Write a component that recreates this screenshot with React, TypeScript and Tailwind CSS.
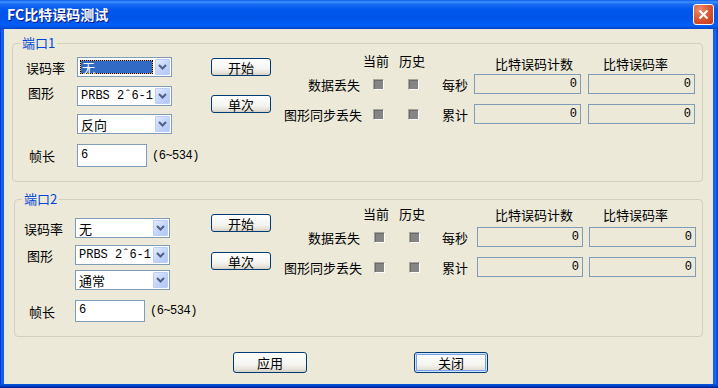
import React from "react";

const MONO = "[font-family:'Liberation_Mono',monospace]";

function Chevron() {
  return (
    <svg width="9" height="6" viewBox="0 0 9 6">
      <polyline points="1,1 4.5,4.5 8,1" fill="none" stroke="#4D6185" strokeWidth="2" />
    </svg>
  );
}

function Combo({ text, mono, selected }: { text: string; mono?: boolean; selected?: boolean }) {
  return (
    <div className="w-[95px] h-full border border-[#7F9DB9] bg-white flex p-[1px]">
      <div className="flex-1 flex items-center pl-[1px] pr-[2px]">
        {selected ? (
          <div className="w-full h-[14px] bg-[#F0B030] border border-dotted border-black">
            <div className="w-full h-full bg-[#316AC5] text-white flex items-center pl-[1px] leading-none">{text}</div>
          </div>
        ) : (
          <span className={`pl-[1px] leading-none ${mono ? MONO + " text-[12px]" : ""}`}>{text}</span>
        )}
      </div>
      <div className="w-[15px] h-full border border-[#BCCEF6] rounded-[1px] bg-[linear-gradient(135deg,#E2EAFD,#C0D2FA_60%,#B2C6F5)] flex items-center justify-center">
        <Chevron />
      </div>
    </div>
  );
}

function Btn({ text, w, h, def }: { text: string; w: string; h: string; def?: boolean }) {
  return (
    <div
      className={`${w} ${h} rounded-[3px] border border-[#003C74] bg-[linear-gradient(to_bottom,#FFFFFF,#F4F4F0_60%,#E6E3D9_85%,#D6D0C5)] flex items-center justify-center leading-none ${
        def ? "shadow-[inset_0_0_0_1px_#CEE7FF,inset_0_0_0_2px_#7D9DEB]" : ""
      }`}
    >
      {text}
    </div>
  );
}

function Field({ w }: { w: string }) {
  return (
    <div className={`${w} h-[20px] border border-[#7F9DB9] flex items-center justify-end pr-[3px] ${MONO} text-[12px] leading-none`}>
      0
    </div>
  );
}

function Check() {
  return (
    <div className="w-[11px] h-[11px] border border-[#A8A59A] border-b-white border-r-white bg-[#858585] shadow-[inset_1px_1px_0_#6A6A6A]" />
  );
}

function Input() {
  return (
    <div className={`w-[70px] h-full border border-[#7F9DB9] bg-white flex items-center pl-[3px] pb-[2px] ${MONO} text-[12px] leading-none`}>
      6
    </div>
  );
}

function Legend({ text }: { text: string }) {
  return (
    <span className="absolute top-[-8px] left-[7px] px-[2px] bg-[#ECE9D8] text-[#0046D5] leading-[14px]">{text}</span>
  );
}

export default function App() {
  return (
    <div className="w-[718px] h-[388px] flex flex-col overflow-hidden bg-[#0855DD] [font-family:'Noto_Sans_CJK_SC',sans-serif] text-[13px] text-black leading-none">
      {/* Title bar */}
      <div className="h-[29px] flex items-center justify-between pl-[7px] pr-[4px] bg-[linear-gradient(to_bottom,#0A5DE8_0%,#3D91FA_7%,#1A6CF3_14%,#0058EE_32%,#0054E8_60%,#005DF5_84%,#0058EB_92%,#0043C6_100%)]">
        <span className="text-white font-bold text-[14px] [text-shadow:1px_1px_0_#0A1883] pb-[1px]">FC比特误码测试</span>
        <div className="w-[21px] h-[21px] rounded-[3px] border border-white bg-[radial-gradient(circle_at_30%_25%,#F08C6C,#D8522F_55%,#C0391C)] flex items-center justify-center">
          <svg width="11" height="11" viewBox="0 0 11 11">
            <line x1="1.5" y1="1.5" x2="9.5" y2="9.5" stroke="white" strokeWidth="2.2" />
            <line x1="9.5" y1="1.5" x2="1.5" y2="9.5" stroke="white" strokeWidth="2.2" />
          </svg>
        </div>
      </div>

      <div className="flex h-[355px]">
        <div className="w-[4px] bg-[linear-gradient(to_right,#0831D9_0,#0831D9_1px,#166AEE_1px,#0A5AE5_100%)]" />
        <div className="w-[709px] bg-[#ECE9D8] flex flex-col">
          {/* Group 1 */}
          <div className="relative mt-[14px] ml-[8px] w-[691px] h-[139px] border border-[#D0D0BF] rounded-[4px] flex">
            <Legend text="端口1" />
            <div className="w-[198px] pl-[13px] pt-[13px] flex flex-col">
              <div className="h-[20px] flex items-center">
                <span className="w-[51px]">误码率</span>
                <Combo text="无" selected />
              </div>
              <div className="mt-[9px] h-[20px] flex items-start">
                <span className="w-[51px] pl-[2px] leading-[13px]">图形</span>
                <Combo text="PRBS 2ˆ6-1" mono />
              </div>
              <div className="mt-[8px] h-[20px] flex">
                <span className="w-[51px]" />
                <Combo text="反向" />
              </div>
              <div className="mt-[10px] h-[23px] flex items-center">
                <span className="w-[51px] pl-[3px]">帧长</span>
                <Input />
                <span className={`ml-[5px] ${MONO} text-[12px] tracking-[-0.5px]`}>(6~534)</span>
              </div>
            </div>
            <div className="w-[60px] pt-[14px] flex flex-col">
              <Btn text="开始" w="w-[60px]" h="h-[18px]" />
              <div className="mt-[19px]">
                <Btn text="单次" w="w-[60px]" h="h-[18px]" />
              </div>
            </div>
            <div className="pt-[6px] flex flex-col">
              <div className="h-[20px] flex items-center">
                <span className="w-[91px]" />
                <span className="w-[36px] pl-[1px]">当前</span>
                <span className="w-[36px] pl-[1px]">历史</span>
                <span className="w-[40px]" />
                <span className="w-[114px] pl-[21px] pt-[6px]">比特误码计数</span>
                <span className="w-[107px] pl-[15px] pt-[6px]">比特误码率</span>
              </div>
              <div className="mt-[4px] h-[20px] flex items-center">
                <span className="w-[91px] text-right pr-[2px]">数据丢失</span>
                <span className="w-[36px] pl-[11px]"><Check /></span>
                <span className="w-[36px] pl-[10px]"><Check /></span>
                <span className="w-[40px] pl-[8px]">每秒</span>
                <span className="w-[114px]"><Field w="w-[107px]" /></span>
                <Field w="w-[107px]" />
              </div>
              <div className="mt-[10px] h-[20px] flex items-center">
                <span className="w-[91px] text-right pr-[0px]">图形同步丢失</span>
                <span className="w-[36px] pl-[11px]"><Check /></span>
                <span className="w-[36px] pl-[10px]"><Check /></span>
                <span className="w-[40px] pl-[8px]">累计</span>
                <span className="w-[114px]"><Field w="w-[107px]" /></span>
                <Field w="w-[107px]" />
              </div>
            </div>
          </div>

          {/* Group 2 */}
          <div className="relative mt-[17px] ml-[10px] w-[689px] h-[138px] border border-[#D0D0BF] rounded-[4px] flex">
            <Legend text="端口2" />
            <div className="w-[196px] pl-[9px] pt-[18px] flex flex-col">
              <div className="h-[20px] flex items-center">
                <span className="w-[51px]">误码率</span>
                <Combo text="无" />
              </div>
              <div className="mt-[7px] h-[20px] flex items-center">
                <span className="w-[51px] pl-[3px]">图形</span>
                <Combo text="PRBS 2ˆ6-1" mono />
              </div>
              <div className="mt-[5px] h-[20px] flex">
                <span className="w-[51px]" />
                <Combo text="通常" />
              </div>
              <div className="mt-[10px] h-[22px] flex items-center">
                <span className="w-[51px] pl-[5px]">帧长</span>
                <Input />
                <span className={`ml-[5px] ${MONO} text-[12px] tracking-[-0.5px]`}>(6~534)</span>
              </div>
            </div>
            <div className="w-[60px] pt-[14px] flex flex-col">
              <Btn text="开始" w="w-[60px]" h="h-[18px]" />
              <div className="mt-[20px]">
                <Btn text="单次" w="w-[60px]" h="h-[18px]" />
              </div>
            </div>
            <div className="pt-[3px] flex flex-col">
              <div className="h-[20px] flex items-center">
                <span className="w-[91px]" />
                <span className="w-[36px] pl-[1px]">当前</span>
                <span className="w-[36px] pl-[1px]">历史</span>
                <span className="w-[43px]" />
                <span className="w-[112px] pl-[18px] pt-[2px]">比特误码计数</span>
                <span className="w-[107px] pl-[14px] pt-[2px]">比特误码率</span>
              </div>
              <div className="mt-[4px] h-[20px] flex items-center">
                <span className="w-[91px] text-right pr-[2px]">数据丢失</span>
                <span className="w-[36px] pl-[12px]"><Check /></span>
                <span className="w-[36px] pl-[11px]"><Check /></span>
                <span className="w-[43px] pl-[8px]">每秒</span>
                <span className="w-[112px]"><Field w="w-[106px]" /></span>
                <Field w="w-[107px]" />
              </div>
              <div className="mt-[10px] h-[20px] flex items-center">
                <span className="w-[91px] text-right">图形同步丢失</span>
                <span className="w-[36px] pl-[12px]"><Check /></span>
                <span className="w-[36px] pl-[11px]"><Check /></span>
                <span className="w-[43px] pl-[8px]">累计</span>
                <span className="w-[112px]"><Field w="w-[106px]" /></span>
                <Field w="w-[107px]" />
              </div>
            </div>
          </div>

          {/* Bottom buttons */}
          <div className="mt-[15px] ml-[229px] flex">
            <Btn text="应用" w="w-[74px]" h="h-[21px]" />
            <div className="ml-[107px]">
              <Btn text="关闭" w="w-[74px]" h="h-[21px]" def />
            </div>
          </div>
        </div>
        <div className="w-[5px] bg-[linear-gradient(to_right,#0A5AE5,#166AEE_50%,#0831D9)]" />
      </div>
      <div className="h-[4px] bg-[linear-gradient(to_bottom,#0855DD,#0040C8_50%,#00138C)]" />
    </div>
  );
}
